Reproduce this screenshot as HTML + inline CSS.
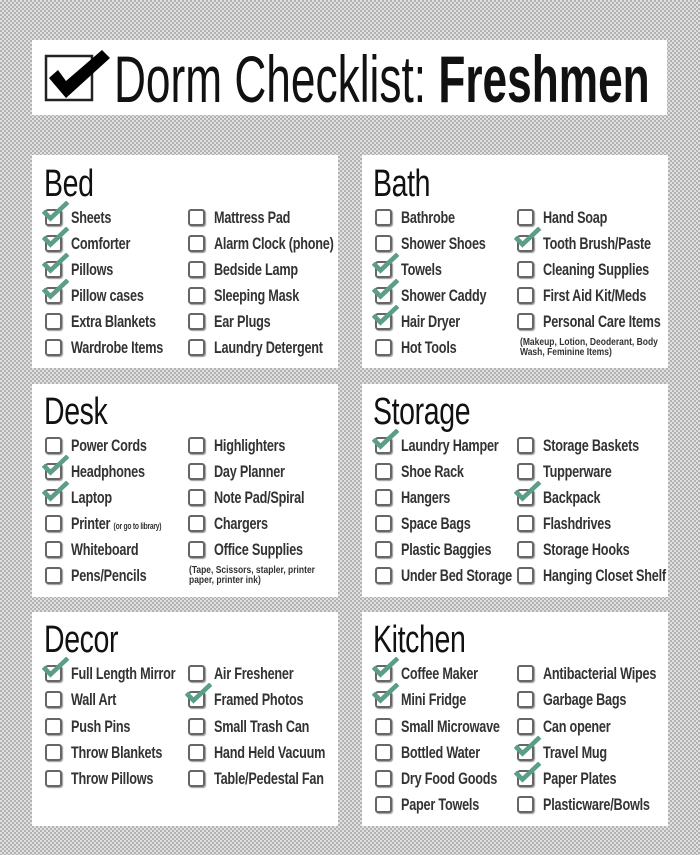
<!DOCTYPE html>
<html><head><meta charset="utf-8"><style>
*{margin:0;padding:0;box-sizing:border-box}
body{width:700px;height:855px;overflow:hidden;position:relative;
background-color:#c9c9c9;
background-image:repeating-conic-gradient(#b2b2b2 0 25%,#e0e0e0 0 50%);background-size:4px 4px;
font-family:"Liberation Sans Narrow","Liberation Sans",sans-serif;}
.p{position:absolute;background:#fff}
.h{position:absolute;font-size:38px;color:#111;line-height:1;letter-spacing:-0.5px;transform:scaleX(.75);transform-origin:left}
.i{position:absolute;height:20px;font-size:17px;line-height:20px;color:#333;white-space:nowrap;font-weight:bold;letter-spacing:-0.3px}
.i .b{position:absolute;left:0;top:1px;width:17px;height:17px;border:2px solid #666;border-radius:3px;box-shadow:1px 1px 1px #999}
.i .t{position:absolute;left:26px;top:0;transform:scaleX(.745);transform-origin:left}
.i svg{position:absolute;left:-3px;top:-7px}
.s{font-size:9px}
.n{position:absolute;font-size:10px;line-height:10px;color:#333;font-weight:bold;transform:scaleX(.85);transform-origin:left;white-space:nowrap}
</style></head><body>
<div class="p" style="left:32px;top:40px;width:635px;height:75px"></div>
<svg style="position:absolute;left:44px;top:48px" width="70" height="56" viewBox="0 0 70 56">
<rect x="2" y="8" width="46" height="44" fill="none" stroke="#222" stroke-width="2.5"/>
<path d="M5 30 L14 22 L22 33 L58 2 L66 10 L22 50 Z" fill="#000"/></svg>
<div style="position:absolute;left:114px;top:44px;font-size:66px;line-height:70px;color:#111;white-space:nowrap;transform:scaleX(.67);transform-origin:left">Dorm Checklist: <b>Freshmen</b></div>

<div class="p" style="left:32px;top:155px;width:306px;height:213px"></div>
<div class="p" style="left:362px;top:155px;width:306px;height:213px"></div>
<div class="p" style="left:32px;top:384px;width:306px;height:213px"></div>
<div class="p" style="left:362px;top:384px;width:306px;height:213px"></div>
<div class="p" style="left:32px;top:612px;width:306px;height:214px"></div>
<div class="p" style="left:362px;top:612px;width:306px;height:214px"></div>

<svg width="0" height="0" style="position:absolute"><defs><symbol id="c" viewBox="0 0 30 24"><path d="M3 13 L9 19 L26 3" fill="none" stroke="#5a9e86" stroke-width="5" stroke-linecap="square"/></symbol></defs></svg>

<div class="h" style="left:44px;top:165px">Bed</div>
<div class="h" style="left:373px;top:165px">Bath</div>
<div class="h" style="left:44px;top:393px">Desk</div>
<div class="h" style="left:373px;top:393px">Storage</div>
<div class="h" style="left:44px;top:621px">Decor</div>
<div class="h" style="left:373px;top:621px">Kitchen</div>

<!-- Bed -->
<div class="i" style="left:45px;top:208px"><span class="b"></span><svg width="28" height="22"><use href="#c"/></svg><span class="t">Sheets</span></div>
<div class="i" style="left:45px;top:234px"><span class="b"></span><svg width="28" height="22"><use href="#c"/></svg><span class="t">Comforter</span></div>
<div class="i" style="left:45px;top:260px"><span class="b"></span><svg width="28" height="22"><use href="#c"/></svg><span class="t">Pillows</span></div>
<div class="i" style="left:45px;top:286px"><span class="b"></span><svg width="28" height="22"><use href="#c"/></svg><span class="t">Pillow cases</span></div>
<div class="i" style="left:45px;top:312px"><span class="b"></span><span class="t">Extra Blankets</span></div>
<div class="i" style="left:45px;top:338px"><span class="b"></span><span class="t">Wardrobe Items</span></div>
<div class="i" style="left:188px;top:208px"><span class="b"></span><span class="t">Mattress Pad</span></div>
<div class="i" style="left:188px;top:234px"><span class="b"></span><span class="t">Alarm Clock (phone)</span></div>
<div class="i" style="left:188px;top:260px"><span class="b"></span><span class="t">Bedside Lamp</span></div>
<div class="i" style="left:188px;top:286px"><span class="b"></span><span class="t">Sleeping Mask</span></div>
<div class="i" style="left:188px;top:312px"><span class="b"></span><span class="t">Ear Plugs</span></div>
<div class="i" style="left:188px;top:338px"><span class="b"></span><span class="t">Laundry Detergent</span></div>

<!-- Bath -->
<div class="i" style="left:375px;top:208px"><span class="b"></span><span class="t">Bathrobe</span></div>
<div class="i" style="left:375px;top:234px"><span class="b"></span><span class="t">Shower Shoes</span></div>
<div class="i" style="left:375px;top:260px"><span class="b"></span><svg width="28" height="22"><use href="#c"/></svg><span class="t">Towels</span></div>
<div class="i" style="left:375px;top:286px"><span class="b"></span><svg width="28" height="22"><use href="#c"/></svg><span class="t">Shower Caddy</span></div>
<div class="i" style="left:375px;top:312px"><span class="b"></span><svg width="28" height="22"><use href="#c"/></svg><span class="t">Hair Dryer</span></div>
<div class="i" style="left:375px;top:338px"><span class="b"></span><span class="t">Hot Tools</span></div>
<div class="i" style="left:517px;top:208px"><span class="b"></span><span class="t">Hand Soap</span></div>
<div class="i" style="left:517px;top:234px"><span class="b"></span><svg width="28" height="22"><use href="#c"/></svg><span class="t">Tooth Brush/Paste</span></div>
<div class="i" style="left:517px;top:260px"><span class="b"></span><span class="t">Cleaning Supplies</span></div>
<div class="i" style="left:517px;top:286px"><span class="b"></span><span class="t">First Aid Kit/Meds</span></div>
<div class="i" style="left:517px;top:312px"><span class="b"></span><span class="t">Personal Care Items</span></div>
<div class="n" style="left:520px;top:338px">(Makeup, Lotion,  Deoderant, Body<br>Wash, Feminine Items)</div>

<!-- Desk -->
<div class="i" style="left:45px;top:436px"><span class="b"></span><span class="t">Power Cords</span></div>
<div class="i" style="left:45px;top:462px"><span class="b"></span><svg width="28" height="22"><use href="#c"/></svg><span class="t">Headphones</span></div>
<div class="i" style="left:45px;top:488px"><span class="b"></span><svg width="28" height="22"><use href="#c"/></svg><span class="t">Laptop</span></div>
<div class="i" style="left:45px;top:514px"><span class="b"></span><span class="t">Printer <span class="s">(or go to library)</span></span></div>
<div class="i" style="left:45px;top:540px"><span class="b"></span><span class="t">Whiteboard</span></div>
<div class="i" style="left:45px;top:566px"><span class="b"></span><span class="t">Pens/Pencils</span></div>
<div class="i" style="left:188px;top:436px"><span class="b"></span><span class="t">Highlighters</span></div>
<div class="i" style="left:188px;top:462px"><span class="b"></span><span class="t">Day Planner</span></div>
<div class="i" style="left:188px;top:488px"><span class="b"></span><span class="t">Note Pad/Spiral</span></div>
<div class="i" style="left:188px;top:514px"><span class="b"></span><span class="t">Chargers</span></div>
<div class="i" style="left:188px;top:540px"><span class="b"></span><span class="t">Office Supplies</span></div>
<div class="n" style="left:189px;top:566px">(Tape, Scissors, stapler, printer<br>paper, printer ink)</div>

<!-- Storage -->
<div class="i" style="left:375px;top:436px"><span class="b"></span><svg width="28" height="22"><use href="#c"/></svg><span class="t">Laundry Hamper</span></div>
<div class="i" style="left:375px;top:462px"><span class="b"></span><span class="t">Shoe Rack</span></div>
<div class="i" style="left:375px;top:488px"><span class="b"></span><span class="t">Hangers</span></div>
<div class="i" style="left:375px;top:514px"><span class="b"></span><span class="t">Space Bags</span></div>
<div class="i" style="left:375px;top:540px"><span class="b"></span><span class="t">Plastic Baggies</span></div>
<div class="i" style="left:375px;top:566px"><span class="b"></span><span class="t">Under Bed Storage</span></div>
<div class="i" style="left:517px;top:436px"><span class="b"></span><span class="t">Storage Baskets</span></div>
<div class="i" style="left:517px;top:462px"><span class="b"></span><span class="t">Tupperware</span></div>
<div class="i" style="left:517px;top:488px"><span class="b"></span><svg width="28" height="22"><use href="#c"/></svg><span class="t">Backpack</span></div>
<div class="i" style="left:517px;top:514px"><span class="b"></span><span class="t">Flashdrives</span></div>
<div class="i" style="left:517px;top:540px"><span class="b"></span><span class="t">Storage Hooks</span></div>
<div class="i" style="left:517px;top:566px"><span class="b"></span><span class="t">Hanging Closet Shelf</span></div>

<!-- Decor -->
<div class="i" style="left:45px;top:664px"><span class="b"></span><svg width="28" height="22"><use href="#c"/></svg><span class="t">Full Length Mirror</span></div>
<div class="i" style="left:45px;top:690px"><span class="b"></span><span class="t">Wall Art</span></div>
<div class="i" style="left:45px;top:717px"><span class="b"></span><span class="t">Push Pins</span></div>
<div class="i" style="left:45px;top:743px"><span class="b"></span><span class="t">Throw Blankets</span></div>
<div class="i" style="left:45px;top:769px"><span class="b"></span><span class="t">Throw Pillows</span></div>
<div class="i" style="left:188px;top:664px"><span class="b"></span><span class="t">Air Freshener</span></div>
<div class="i" style="left:188px;top:690px"><span class="b"></span><svg width="28" height="22"><use href="#c"/></svg><span class="t">Framed Photos</span></div>
<div class="i" style="left:188px;top:717px"><span class="b"></span><span class="t">Small Trash Can</span></div>
<div class="i" style="left:188px;top:743px"><span class="b"></span><span class="t">Hand Held Vacuum</span></div>
<div class="i" style="left:188px;top:769px"><span class="b"></span><span class="t">Table/Pedestal Fan</span></div>

<!-- Kitchen -->
<div class="i" style="left:375px;top:664px"><span class="b"></span><svg width="28" height="22"><use href="#c"/></svg><span class="t">Coffee Maker</span></div>
<div class="i" style="left:375px;top:690px"><span class="b"></span><svg width="28" height="22"><use href="#c"/></svg><span class="t">Mini Fridge</span></div>
<div class="i" style="left:375px;top:717px"><span class="b"></span><span class="t">Small Microwave</span></div>
<div class="i" style="left:375px;top:743px"><span class="b"></span><span class="t">Bottled Water</span></div>
<div class="i" style="left:375px;top:769px"><span class="b"></span><span class="t">Dry Food Goods</span></div>
<div class="i" style="left:375px;top:795px"><span class="b"></span><span class="t">Paper Towels</span></div>
<div class="i" style="left:517px;top:664px"><span class="b"></span><span class="t">Antibacterial Wipes</span></div>
<div class="i" style="left:517px;top:690px"><span class="b"></span><span class="t">Garbage Bags</span></div>
<div class="i" style="left:517px;top:717px"><span class="b"></span><span class="t">Can opener</span></div>
<div class="i" style="left:517px;top:743px"><span class="b"></span><svg width="28" height="22"><use href="#c"/></svg><span class="t">Travel Mug</span></div>
<div class="i" style="left:517px;top:769px"><span class="b"></span><svg width="28" height="22"><use href="#c"/></svg><span class="t">Paper Plates</span></div>
<div class="i" style="left:517px;top:795px"><span class="b"></span><span class="t">Plasticware/Bowls</span></div>
</body></html>
